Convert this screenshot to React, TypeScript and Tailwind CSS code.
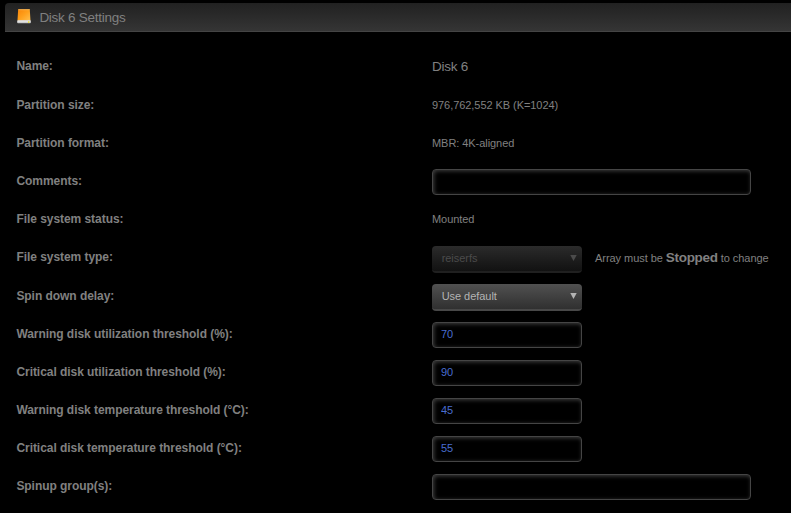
import type { ReactNode } from 'react';

function DiskIcon() {
  return (
    <svg className="ml-[12px] mt-[6px] h-[15px] w-[14px] shrink-0" viewBox="0 0 14 15">
      <defs>
        <linearGradient id="disk-body" x1="0" y1="0" x2="1" y2="1">
          <stop offset="0" stopColor="#f88408" />
          <stop offset="0.5" stopColor="#ffa01c" />
          <stop offset="1" stopColor="#ffc050" />
        </linearGradient>
        <linearGradient id="disk-base" x1="0" y1="0" x2="0" y2="1">
          <stop offset="0" stopColor="#ffffff" />
          <stop offset="1" stopColor="#bcbcbc" />
        </linearGradient>
      </defs>
      <path d="M1.2 0.3h11.6l0.7 11.2H0.5z" fill="url(#disk-body)" />
      <path d="M1.3 0.7h11.4" stroke="#ffc46a" strokeWidth="0.7" />
      <rect x="0.2" y="11.2" width="13.6" height="3" rx="0.8" fill="url(#disk-base)" />
      <rect x="11" y="12.4" width="1.4" height="1.3" fill="#f4e400" />
    </svg>
  );
}

function Row({ label, tall = false, children }: { label: string; tall?: boolean; children?: ReactNode }) {
  return (
    <div className={`flex items-start ${tall ? 'h-[39px]' : 'h-[38px]'}`}>
      <div className="w-[416px] shrink-0 pl-[0.4px] pt-[10px] text-[12px] font-bold leading-[16px] tracking-[-0.05px]">{label}</div>
      {children}
    </div>
  );
}

function Value({ children }: { children: ReactNode }) {
  return <div className="pt-[10px] text-[11px] leading-[16px] tracking-[-0.06px]">{children}</div>;
}

function Field({ value = '', wide = false }: { value?: string; wide?: boolean }) {
  return (
    <input
      type="text"
      defaultValue={value}
      className={`mt-[6px] h-[26px] rounded-[4px] border border-[#454545] bg-black px-[8px] pb-[3px] pt-[1px] text-[11px] text-[#486dd0] shadow-[inset_1px_1px_4px_#404040] outline-none ${wide ? 'w-[319px]' : 'w-[150px]'}`}
    />
  );
}

function Select({ value, disabled = false }: { value: string; disabled?: boolean }) {
  return (
    <button
      type="button"
      disabled={disabled}
      className={`flex h-[27px] w-[150px] items-start justify-between rounded-[4px] border-b-2 bg-linear-to-b pl-[9.7px] pr-[5.5px] pt-[4px] text-[11px] leading-[16px] tracking-[-0.05px] ${
        disabled
          ? 'mt-[7px] border-[#202020] from-[#2b2b2b] to-[#121212] text-[#4b4b4b]'
          : 'mt-[6px] border-[#484848] from-[#515151] to-[#303030] text-[#b4b4b4]'
      }`}
    >
      <span>{value}</span>
      <svg className="mt-[5px] h-[6px] w-[7px]" viewBox="0 0 7 6">
        <path d="M0.3 0h6.4L3.5 6z" fill="currentColor" />
      </svg>
    </button>
  );
}

export default function App() {
  return (
    <main className="h-[513px] w-[791px] overflow-hidden bg-black pl-[5px] pt-[3px] font-['Liberation_Sans',Arial,sans-serif] text-[#808080]">
      <header className="flex h-[29px] items-start rounded-tl-[4px] border-b border-[#444444] bg-linear-to-b from-[#212121] to-[#353535]">
        <DiskIcon />
        <h1 className="ml-[8.4px] mt-[7px] text-[13.5px] leading-[16px] tracking-[-0.27px]">Disk 6 Settings</h1>
      </header>
      <section className="pl-[11px] pt-[16px]">
        <Row label="Name:" tall>
          <div className="pt-[11px] text-[13.5px] leading-[16px] tracking-[-0.27px]">Disk 6</div>
        </Row>
        <Row label="Partition size:"><Value>976,762,552 KB (K=1024)</Value></Row>
        <Row label="Partition format:"><Value>MBR: 4K-aligned</Value></Row>
        <Row label="Comments:"><Field wide /></Row>
        <Row label="File system status:"><Value>Mounted</Value></Row>
        <Row label="File system type:" tall>
          <Select value="reiserfs" disabled />
          <div className="ml-[13px] pt-[11px] text-[11px] leading-[16px] tracking-[-0.05px]">
            Array must be <strong className="text-[13.5px] leading-[16px] tracking-[-0.3px]">Stopped</strong> to change
          </div>
        </Row>
        <Row label="Spin down delay:"><Select value="Use default" /></Row>
        <Row label="Warning disk utilization threshold (%):"><Field value="70" /></Row>
        <Row label="Critical disk utilization threshold (%):"><Field value="90" /></Row>
        <Row label="Warning disk temperature threshold (°C):"><Field value="45" /></Row>
        <Row label="Critical disk temperature threshold (°C):"><Field value="55" /></Row>
        <Row label="Spinup group(s):"><Field wide /></Row>
      </section>
    </main>
  );
}
